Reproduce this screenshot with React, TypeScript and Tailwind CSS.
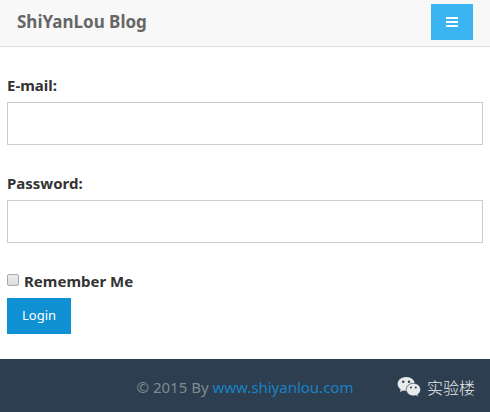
function ChatIcon() {
  return (
    <svg viewBox="0 0 24 22" className="h-[22px] w-6" aria-hidden="true">
      <path fill="#e8eaec" d="M9.2 1C4.4 1 .6 4.1.6 8c0 2.300 1.200 4.100 3.100 5.400L3 16l3-1.500c1.100.300 2.100.500 3.200.500 4.800 0 8.600-3.100 8.600-7S14 1 9.200 1z" />
      <path fill="#e8eaec" stroke="#2d3e50" strokeWidth=".7" d="M16.400 7.300c-4 0-7.200 2.800-7.200 6.300s3.200 6.300 7.200 6.300c.9 0 1.800-.2 2.600-.4l2.500 1.400-.7-2.300c1.700-1.200 2.800-2.900 2.800-5 0-3.500-3.200-6.300-7.200-6.300z" />
      <g fill="#2d3e50">
        <circle cx="6.200" cy="5.800" r="1.200" />
        <circle cx="12" cy="5.800" r="1.200" />
        <circle cx="14" cy="11.600" r="1" />
        <circle cx="18.800" cy="11.600" r="1" />
      </g>
    </svg>
  );
}

export default function App() {
  return (
    <div className="bg-white font-['Noto_Sans','Noto_Sans_CJK_SC',sans-serif] text-[#333]">
      <header className="flex items-start justify-between border-b border-[#ddd] bg-[#f8f8f8] px-[17px] pt-1 pb-[6px]">
        <a href="#" className="text-[17px] leading-9 font-bold text-[#666]">ShiYanLou Blog</a>
        <button type="button" aria-label="Menu" className="flex h-9 w-[42px] items-center justify-center bg-[#3bb4f2]">
          <svg viewBox="0 0 12 10" className="h-[10px] w-3 fill-white" aria-hidden="true"><path d="M0 0h12v2H0zM0 4h12v2H0zM0 8h12v2H0z" /></svg>
        </button>
      </header>
      <form className="px-[7px] pt-[26px] pb-[25px] text-[15px]">
        <label htmlFor="email" className="block leading-6 font-bold">E-mail:</label>
        <input id="email" type="email" className="mt-[5px] block h-[43px] w-full border border-[#ccc] px-2" />
        <label htmlFor="password" className="mt-[26px] block leading-6 font-bold">Password:</label>
        <input id="password" type="password" className="mt-[5px] block h-[43px] w-full border border-[#ccc] px-2" />
        <div className="mt-[26px] flex items-start gap-[5px]">
          <input id="remember" type="checkbox" className="mt-[5px] size-3 appearance-none rounded-xs border border-[#aaa] bg-linear-to-b from-[#ececec] to-[#dcdcdc] checked:from-[#0e90d2] checked:to-[#0e90d2]" />
          <label htmlFor="remember" className="leading-6 font-bold">Remember Me</label>
        </div>
        <button type="submit" className="mt-[5px] block h-9 bg-[#0e90d2] px-[15px] text-[13px] text-white">Login</button>
      </form>
      <footer className="grid grid-cols-[1fr_auto_1fr] items-center bg-[#2d3e50] pt-4 pb-[13px] text-[15px] leading-6 text-[#7f8c8d]">
        <p className="col-start-2">
          © 2015 By <a href="#" className="text-[#1a82c4]">www.shiyanlou.com</a>
        </p>
        <div className="flex items-center justify-end gap-[6px] pr-[15px] text-base leading-6 text-[#e8eaec]">
          <ChatIcon />
          <span className="font-['Noto_Sans_CJK_SC',sans-serif] font-light">实验楼</span>
        </div>
      </footer>
    </div>
  );
}
